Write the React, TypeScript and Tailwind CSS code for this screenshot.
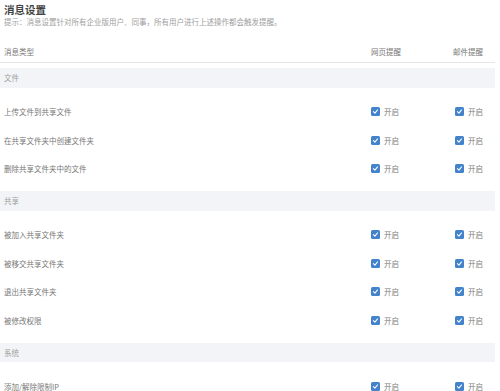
const groups = [
  {
    name: "文件",
    items: ["上传文件到共享文件", "在共享文件夹中创建文件夹", "删除共享文件夹中的文件"],
  },
  {
    name: "共享",
    items: ["被加入共享文件夹", "被移交共享文件夹", "退出共享文件夹", "被修改权限"],
  },
  {
    name: "系统",
    items: ["添加/解除限制IP"],
  },
];

function Check() {
  return (
    <span className="flex items-center gap-[4px]">
      <span className="flex h-[9px] w-[9px] items-center justify-center rounded-[1.5px] bg-[#4383cc]">
        <svg viewBox="0 0 10 10" className="h-[7px] w-[7px]">
          <path d="M2 5.2 L4.2 7.3 L8 2.8" fill="none" stroke="#fff" strokeWidth="1.5" strokeLinecap="round" strokeLinejoin="round" />
        </svg>
      </span>
      <span className="text-[7.5px] leading-none text-[#7a7a7a]">开启</span>
    </span>
  );
}

export default function App() {
  return (
    <div
      className="h-[391px] w-[500px] overflow-hidden bg-white"
      style={{ fontFamily: '"Noto Sans CJK SC", "Noto Sans", sans-serif' }}
    >
      <div className="w-[495px]">
        <div className="px-[4px] pt-[3px]">
          <h1 className="text-[10.5px] font-bold leading-[14px] text-[#444]">消息设置</h1>
          <p className="text-[7.5px] leading-[10px] text-[#a0a0a0]">
            提示：消息设置针对所有企业版用户、同事，所有用户进行上述操作都会触发提醒。
          </p>
        </div>

        <div className="mt-[14px] flex h-[22px] items-center border-b border-[#e6e6e6] pl-[4px] text-[7.5px] text-[#777]">
          <div className="flex-1">消息类型</div>
          <div className="w-[82px]">网页提醒</div>
          <div className="w-[42px]">邮件提醒</div>
        </div>

        {groups.map((g, gi) => (
          <div key={g.name} className={gi === 0 ? "mt-[5px]" : "mt-[8px]"}>
            <div className="flex h-[19.5px] items-center bg-[#f2f4f7] pl-[4px] text-[7.5px] text-[#a0a0a0]">
              {g.name}
            </div>
            <div className="mt-[10px]">
              {g.items.map((item) => (
                <div key={item} className="flex h-[28.5px] items-center pl-[4px] text-[7.5px] text-[#777]">
                  <div className="flex-1">{item}</div>
                  <div className="w-[84px]">
                    <Check />
                  </div>
                  <div className="w-[40px]">
                    <Check />
                  </div>
                </div>
              ))}
            </div>
          </div>
        ))}
      </div>
    </div>
  );
}
